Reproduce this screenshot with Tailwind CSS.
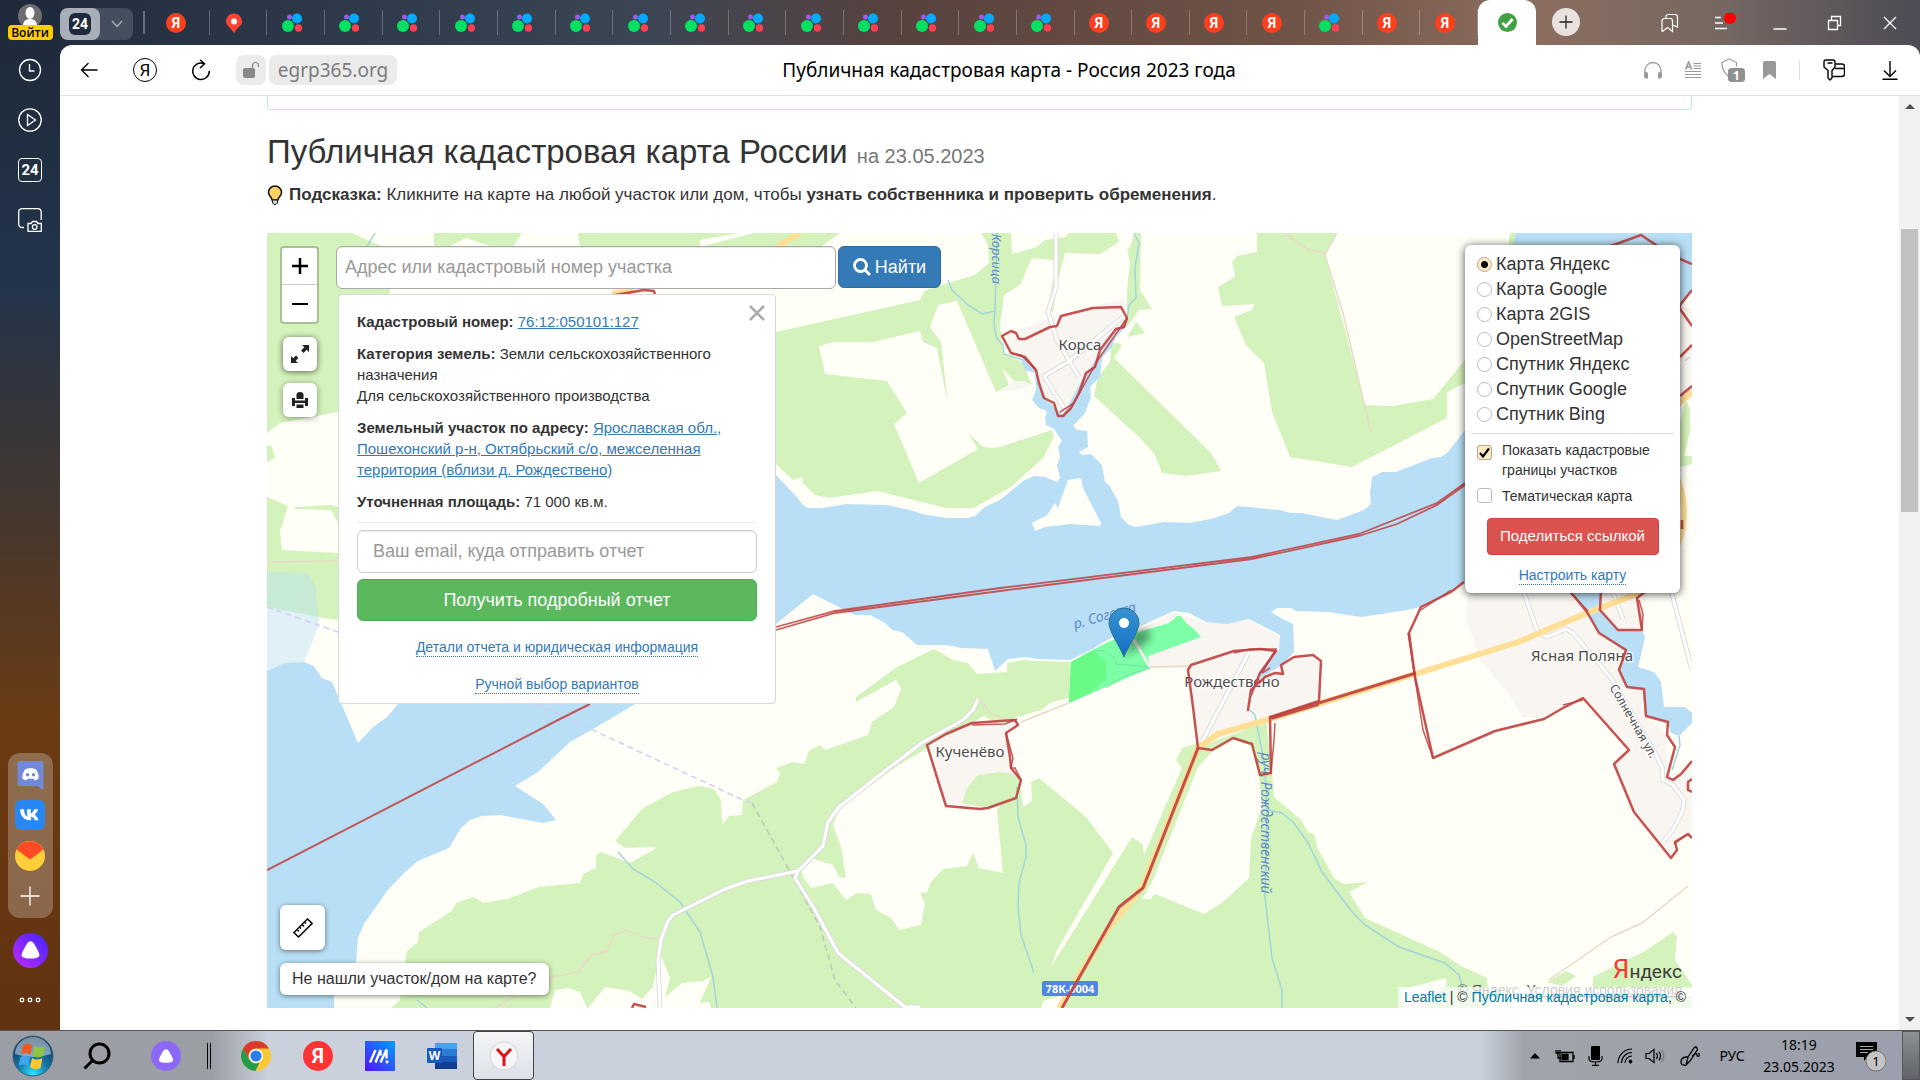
<!DOCTYPE html>
<html lang="ru">
<head>
    <meta charset="UTF-8">
    <meta name="viewport" content="width=device-width, initial-scale=1.0">
    <title>Публичная кадастровая карта - Россия 2023 года</title>
    <script src="https://cdn.jsdelivr.net/npm/@tailwindcss/browser@4"></script>
</head>
<body class="h-screen flex flex-col overflow-hidden bg-white font-['Liberation_Sans',Arial,sans-serif] text-[#333]">

    <!-- Значки вкладок -->
    <svg class="hidden" aria-hidden="true">
        <symbol id="i-ya" viewBox="0 0 20 24">
            <ellipse cx="10" cy="12" rx="10" ry="10" fill="#fc3f1d"/>
            <text x="10" y="17" text-anchor="middle" font-family="Roboto, sans-serif" font-weight="700" font-size="14" fill="#fff">Я</text>
        </symbol>
        <symbol id="i-pin" viewBox="0 0 20 24">
            <path d="M10 2.500c-4.400 0-8 3.400-8 7.800 0 5 5.200 6.200 7.200 11.200h1.600c2-5 7.200-6.200 7.200-11.200 0-4.400-3.600-7.800-8-7.800z" fill="#fc4234"/>
            <circle cx="10" cy="10.500" r="3" fill="#fff"/>
        </symbol>
        <symbol id="i-dots" viewBox="0 0 20 24">
            <circle cx="7.500" cy="6" r="2.500" fill="#965eeb"/>
            <circle cx="15" cy="7.500" r="5" fill="#0af"/>
            <circle cx="6" cy="15" r="6" fill="#04e061"/>
            <circle cx="16.500" cy="17" r="3.700" fill="#ff4053"/>
        </symbol>
    </svg>

    <div class="flex-1 min-h-0 flex bg-linear-to-r from-[#1f2b3c] via-[#58423f] to-[#4d4b55]">

        <!-- Боковая панель браузера -->
        <aside class="w-[60px] shrink-0 flex flex-col items-center bg-[linear-gradient(to_bottom,#1f2b3c_5%,#23344a_28%,#45372f_50%,#6b3c13_70%,#61320f_100%)] text-white">
            <button class="mt-1 h-[37px] flex flex-col items-center" aria-label="Войти">
                <svg class="size-6 shrink-0" viewBox="0 0 24 24"><circle cx="12" cy="12" r="12" fill="#6d6d6d"/><ellipse cx="12" cy="9" rx="4.500" ry="6" fill="#fff"/><path d="M5 22c0-6 4-7 7-7s7 1 7 7z" fill="#fff"/></svg>
                <span class="relative -mt-[3px] w-[45px] h-[15px] rounded bg-[#fc0] text-black text-[12px] leading-[15px] font-semibold text-center font-['Open_Sans',sans-serif]">Войти</span>
            </button>
            <div class="mt-[4px] flex flex-col">
                <button class="h-[50px] w-10 grid place-items-center" aria-label="История"><svg class="size-6" viewBox="0 0 24 24" fill="none" stroke="#fff" stroke-width="1.300"><circle cx="12" cy="12" r="10.500"/><path d="M11.500 6v7h5"/></svg></button>
                <button class="h-[50px] w-10 grid place-items-center" aria-label="Видео"><svg class="size-6" viewBox="0 0 24 24" fill="none" stroke="#fff" stroke-width="1.300"><circle cx="12" cy="12" r="11.200"/><path d="M9.500 6.500v11l8-5.500z"/></svg></button>
                <button class="h-[50px] w-10 grid place-items-center" aria-label="24"><span class="size-6 rounded border border-white text-[15px] leading-[22px] font-bold font-['Roboto',sans-serif]">24</span></button>
                <button class="h-[50px] w-10 grid place-items-center" aria-label="Скриншот"><svg class="size-6" viewBox="0 0 24 24" fill="none" stroke="#fff" stroke-width="1.300"><path d="M6 19.500H4.500Q.7 19.500.7 16V4Q.7.700 4.500.700h15q3.700 0 3.700 3.300v8"/><path d="M10 15.500h3l1.500-2h4l1.500 2h3.300v8H10z"/><circle cx="16.700" cy="19" r="2.300"/></svg></button>
            </div>
            <div class="mt-auto w-[45px] h-[165px] rounded-xl bg-white/25 flex flex-col items-center justify-around py-0.5">
                <button aria-label="Discord"><svg class="w-[27px] h-[30px]" viewBox="0 0 27 30"><path d="M3 1h21a2.500 2.500 0 0 1 2.500 2.500V30L20 26H3a2.500 2.500 0 0 1-2.500-2.500v-20A2.500 2.500 0 0 1 3 1z" fill="#7289da"/><path d="M8 9.500c3-1.800 8-1.800 11 0 2 3 3 6 2.600 9-1.500 1.200-3 1.700-4 1.800l-1-1.600H10.400l-1 1.600c-1-.1-2.500-.6-4-1.800C5 15.500 6 12.500 8 9.500z" fill="#fff"/><circle cx="10.500" cy="14.700" r="1.700" fill="#7289da"/><circle cx="16.500" cy="14.700" r="1.700" fill="#7289da"/></svg></button>
                <button class="w-[30px] h-[30px]" aria-label="VK"><svg class="size-[30px]" viewBox="0 0 30 30"><rect width="30" height="30" rx="6" fill="#2787f5"/><path d="M5.500 9.500h3.200c.2 4.500 2 7 3.700 7.500v-7.500h3v4.300c1.700-.3 3.300-2.200 4-4.300h3.200c-.5 2.400-2.200 4.300-3.500 5.300 1.300.8 3.200 2.400 4 5.200H20c-.7-2-2.300-3.500-4.300-3.700V20h-.5C9 20 5.600 16 5.500 9.500z" fill="#fff" stroke="#fff" stroke-width=".6"/></svg></button>
                <button aria-label="Почта"><svg class="size-[30px]" viewBox="0 0 30 30"><circle cx="15" cy="15" r="15" fill="#ffcf3a"/><path d="M1.600 8.500a15 15 0 0 1 26.800 0L15 18.500z" fill="#ff4a25"/></svg></button>
                <button aria-label="Добавить"><svg class="size-[30px]" viewBox="0 0 30 30" stroke="#fff" stroke-width="1.300"><path d="M15 5.500v19M5.500 15h19"/></svg></button>
            </div>
            <button class="mt-[15px]" aria-label="Алиса">
                <svg class="size-[35px]" viewBox="0 0 40 40">
                    <defs>
                        <linearGradient id="g-alice" x1="0" y1="1" x2="1" y2="0">
                            <stop offset=".1" stop-color="#b429ff"/>
                            <stop offset=".9" stop-color="#4a26ff"/>
                        </linearGradient>
                    </defs>
                    <circle cx="20" cy="20" r="20" fill="url(#g-alice)"/>
                    <path d="M20 9.500c2 0 3 1 4.200 3 2.200 3.400 5 8.500 5.800 11.300.9 3.600-1.500 5.400-10 5.400s-10.900-1.800-10-5.400c.8-2.800 3.600-7.900 5.800-11.300 1.200-2 2.200-3 4.200-3z" fill="#fff"/>
                </svg>
            </button>
            <button class="mt-[22px] mb-5" aria-label="Ещё"><svg class="w-6 h-[20px]" viewBox="0 0 24 20" fill="none" stroke="#fff" stroke-width="1.300"><circle cx="4" cy="10" r="1.800"/><circle cx="12" cy="10" r="1.800"/><circle cx="20" cy="10" r="1.800"/></svg></button>
        </aside>

        <div class="flex-1 min-w-0 flex flex-col">

            <!-- Вкладки -->
            <header class="h-[45px] shrink-0 flex items-center bg-[linear-gradient(to_right,#222e40_0%,#3b4554_31%,#58423f_45%,#6f5346_66%,#8b6e5f_79%)] text-white">
                <div class="h-8 w-[73px] mt-0.5 shrink-0 rounded-lg bg-white/15 flex items-center">
                    <button class="h-8 w-10 rounded-lg bg-[#a9afb8] grid place-items-center" aria-label="Группа 24">
                        <span class="w-[22px] h-[22px] rounded-md bg-[#1f2b3c] text-[14px] leading-[22px] font-bold font-['Roboto',sans-serif]">24</span>
                    </button>
                    <button class="flex-1 grid place-items-center" aria-label="Список вкладок"><svg class="w-3 h-2" viewBox="0 0 12 8" fill="none" stroke="#a4acb7" stroke-width="1.500"><path d="M1 1l5 5.500L11 1"/></svg></button>
                </div>
                <span class="w-[10px] shrink-0"></span>
                <span class="h-[23px] w-[9px] shrink-0 border-l-2 border-white/30"></span>
                <nav id="tabs" class="w-[1326px] flex h-full items-center"></nav>
                <button class="relative w-[58px] h-full shrink-0 rounded-t-xl bg-white grid place-items-center" aria-label="Публичная кадастровая карта">
                    <svg class="size-[19px]" viewBox="0 0 20 20"><circle cx="10" cy="10" r="10" fill="#40a142"/><path d="M4.800 10.400l3.600 3.700 7-7.800" fill="none" stroke="#fff" stroke-width="3"/></svg>
                </button>
                <div class="flex-1 h-full flex items-center bg-linear-to-r from-[#8b6e5f] via-[#756762] to-[#4d4b55]">
                    <button class="ml-4 mb-0.5 size-7 rounded-full bg-[#e8e1de] grid place-items-center" aria-label="Новая вкладка"><svg class="size-4" viewBox="0 0 16 16" stroke="#222" stroke-width="1.300"><path d="M8 1.500v13M1.500 8h13"/></svg></button>
                    <span class="flex-1"></span>
                    <div class="w-[276px] mr-0.5 flex">
                        <button class="flex-1 grid place-items-center" aria-label="Закладки"><svg class="w-[18px] h-5" viewBox="0 0 18 20" fill="none" stroke="#fff" stroke-width="1.200"><path d="M1 18V8q0-2.500 2.500-2.500h6q2 0 2 2.500v10.500l-5-4-5 4z"/><path d="M5 5.500V3.500Q5 1.500 7.500 1.500h6.500q2.500 0 2.500 2.500v10l-5-2"/></svg></button>
                        <button class="flex-1 grid place-items-center" aria-label="Меню"><svg class="w-6 h-5" viewBox="0 0 24 20" fill="none" stroke="#fff" stroke-width="1.300"><path d="M2 4.500h6M2 10h8M2 15.500h12"/><circle cx="17" cy="5" r="6" fill="red" stroke="none"/></svg></button>
                        <button class="flex-1 grid place-items-center" aria-label="Свернуть"><svg class="w-4 h-5" viewBox="0 0 16 20" stroke="#fff" stroke-width="1.500"><path d="M1.500 16h13"/></svg></button>
                        <button class="flex-1 grid place-items-center" aria-label="Восстановить"><svg class="w-4 h-5" viewBox="0 0 16 20" fill="none" stroke="#fff" stroke-width="1.300"><path d="M1.500 7.500h9v9h-9zM4.500 7.500v-4h9v9h-3"/></svg></button>
                        <button class="flex-1 grid place-items-center" aria-label="Закрыть"><svg class="w-4 h-5" viewBox="0 0 16 20" stroke="#fff" stroke-width="1.300"><path d="M2 4l12 12M14 4L2 16"/></svg></button>
                    </div>
                </div>
            </header>

            <!-- Адресная строка -->
            <div class="h-[51px] shrink-0 bg-white border-b border-[#e2e2e2] rounded-t-xl flex items-center font-['Noto_Sans',sans-serif] text-black">
                <button class="ml-px w-14 grid place-items-center" aria-label="Назад"><svg class="size-[18px]" viewBox="0 0 18 18" fill="none" stroke="#000" stroke-width="1.300"><path d="M17.500 9H1.500M8.500 2L1.500 9l7 7"/></svg></button>
                <button class="w-14 grid place-items-center" aria-label="Яндекс"><span class="size-6 rounded-full border border-black text-[17px] leading-[22px] font-['Roboto',sans-serif]">Я</span></button>
                <button class="w-14 grid place-items-center" aria-label="Обновить"><svg class="size-[22px]" viewBox="0 0 22 22" fill="none" stroke="#000" stroke-width="1.500"><path d="M14 4.500A8.300 8.300 0 1 0 19.300 12M10 .8l4.500 4L10 9"/></svg></button>
                <button class="ml-[7px] w-[30px] h-[30px] rounded-lg bg-[#ebebeb] grid place-items-center" aria-label="Защита"><svg class="w-4 h-[18px]" viewBox="0 0 16 18"><rect y="7" width="12" height="10" rx="2" fill="#888"/><path d="M9.500 7V4.500a3 3 0 0 1 6 0V6" fill="none" stroke="#888" stroke-width="1.200"/></svg></button>
                <a href="#" class="ml-[3px] w-[128px] h-[30px] rounded-lg bg-[#ebebeb] text-[#7b7b7b] text-[19px] leading-[30px] text-center">egrp365.org</a>
                <span class="flex-1 pr-3 text-center text-[19px]">Публичная кадастровая карта - Россия 2023 года</span>
                <button class="w-10 grid place-items-center" aria-label="Аудио"><svg class="size-5" viewBox="0 0 20 20"><path d="M2 16v-5.500a8 8 0 0 1 16 0V16" fill="none" stroke="#999" stroke-width="1.300"/><path d="M1 12.500q4-1.500 4 1.500v4.500q-4 .5-4-2.500zM19 12.500q-4-1.500-4 1.500v4.500q4 .5 4-2.500z" fill="#999"/></svg></button>
                <button class="w-10 grid place-items-center" aria-label="Режим чтения"><svg class="w-4 h-[18px]" viewBox="0 0 16 18" stroke="#999" stroke-width="1.200"><path d="M8.500 2.500H16M8.500 5H16M8.500 7.500H16M0 10.500h16M0 13.500h16M0 16.500h16"/><path d="M.7 8.500L3.600 1l3 7.500M1.800 6h3.800" fill="none" stroke-width="1.600"/></svg></button>
                <button class="relative w-10 h-8 grid place-items-center" aria-label="Protect"><svg class="size-6" viewBox="0 0 24 24"><path d="M8 19Q1 13.500.800 4.500L8 .8l7.500 3.700v4" fill="none" stroke="#999" stroke-width="1.200"/><rect x="7" y="10" width="17" height="14" rx="3.500" fill="#919191"/><text x="15.500" y="21.500" font-size="12" font-weight="700" text-anchor="middle" fill="#fff">1</text></svg></button>
                <button class="w-10 pr-2 grid place-items-center" aria-label="В закладки"><svg class="w-[13px] h-[18px]" viewBox="0 0 13 18"><path d="M2 0h9q2 0 2 2v16l-6.500-5L0 18V2q0-2 2-2z" fill="#999"/></svg></button>
                <span class="ml-1.5 mr-1.5 h-5 border-l border-[#ddd]"></span>
                <button class="w-14 grid place-items-center" aria-label="Пароли"><svg class="size-[22px]" viewBox="0 0 22 22" fill="none" stroke="#000" stroke-width="1.400"><path d="M5 11.500L1 8V3Q1 1 3 1h7q2 0 2 2v5L9 11.500V19l-2 2-2-2zM4.500 4h5"/><path d="M12.500 5H19q2.500 0 2.500 2.500V15q0 2.500-2.500 2.500H9.500M12 9.500h9.500"/></svg></button>
                <button class="w-14 mr-0.5 grid place-items-center" aria-label="Загрузки"><svg class="size-5" viewBox="0 0 20 20" fill="none" stroke="#000" stroke-width="1.400"><path d="M10 1v15M4 10.500l6 6 6-6M2.500 19.300h15"/></svg></button>
            </div>

            <!-- Страница -->
            <div class="flex-1 min-h-0 flex bg-white">
                <main class="flex-1 min-w-0 overflow-hidden">
                    <div class="w-full max-w-[1425px] mx-auto">
                        <div class="h-[14px] rounded-b border border-t-0 border-[#bce8f1]"></div>
                        <h1 class="mt-5 text-[33px] leading-[44px]">Публичная кадастровая карта России <small class="text-[20px] text-[#777]">на 23.05.2023</small></h1>
                        <p class="mt-[3px] flex items-center gap-1.5 text-[17px] leading-7">
                            <svg class="w-4 h-5" viewBox="0 0 16 20"><path d="M8 1a6.500 6.500 0 0 0-6.500 6.500C1.500 11 5 12 5 15h6c0-3 3.500-4 3.500-7.500A6.500 6.500 0 0 0 8 1z" fill="#ffd166" stroke="#111" stroke-width="1.500"/><path d="M5.500 15h5v3l-1.500 1.500H7L5.500 18z" fill="#ccc" stroke="#222"/></svg>
                            <span><b>Подсказка:</b> Кликните на карте на любой участок или дом, чтобы <b>узнать собственника и проверить обременения</b>.</span>
                        </p>

                        <div class="relative mt-6 h-[775px] overflow-hidden bg-[#fffff7]">
                            <svg class="absolute inset-0 w-full h-full" viewBox="267 233 1425 775" preserveAspectRatio="xMidYMid slice" role="img" aria-label="Карта">
                                <!-- леса -->
                                <g fill="#d4f2bb">
                                    <path d="M267 233H352L390 250V292L338 412 280 423 267 433zM267 445l5 2 3 11-8 4zM267 497l21 9-8 25 2 19 56 3v67l-20-3-51-10zM295 507l36-2 7 2v16l-7-13-36-1z"/>
                                    <path d="M434 233h88l-9 14h-20l-27-9-18 9h-14zM578 233h230l32 0-20 14H580z"/>
                                    <path d="M776 332L920 300 924 291 945 284 975 275 989 263 988 245 981 233H1011L1012 254 1037 247 1045 240 1066 237 1068 233H1116L1119 242 1100 254 1065 253 1057 283 1053 312 1048 310 1056 263 1052 260 1032 258 1020 285 1004 295 1000 327 1003 353 1023 363 1032 385 1024 381 1014 381 1002 368 1009 385 996 392 957 301 938 305 930 327 941 342 948 405 937 348 923 342 920 331 873 342H833L819 346 825 374 887 381 907 413 894 424 919 483 978 449 968 433 983 447 992 448 1000 447 1052 430 1054 437 1043 458 1011 487 973 508H946L877 491 829 498 815 495 803 483 802 477 793 480 776 464z"/>
                                    <path d="M1134 233h7l-1 57 12 19-13 1-12 17 0-37 3-28-3-12 4-5zM1136 322l9 11-18 4z"/>
                                    <path d="M1116 342l6 3-8 13 97 95 10 18-35 5-24-3-8-20-15-16-45-41 4-19 12-15 1-15z"/>
                                    <path d="M1257 233V252L1237 256 1232 262 1235 277 1218 287 1222 306 1255 304 1252 310 1234 317 1246 345 1264 363 1272 412 1290 457 1352 467 1447 418V392L1465 383V360L1433 399 1393 406 1365 405 1325 255 1337 233zM1510 233h6l-2 15h-6zM1686 400l4 10v22l-6 24 8 0v8l-12 3v-45z"/>
                                    <path d="M391 1008L400 1000 405 963 407 951 418 942 419 932 452 911 456 903 474 897 483 903 507 899 539 887 580 883 583 874 596 868V855L601 852 630 863 655 849V847L625 848 615 841 643 808 673 792 698 786 714 789 721 800 722 825 729 816 742 815 743 800 777 782 780 773 776 768 792 762 804 764 809 751 820 745 825 750 868 735 872 722 894 707 901 689 896 680 856 702V697L897 667 934 649 953 660 968 663 977 674 1007 672V663L1024 660 1038 661 1071 662 1069 698 1052 702 1041 710 1014 718 1003 727 984 716 900 764 840 807 833 825 841 847 846 878 839 877 833 865 813 859 802 870 803 877 811 888 833 883 846 900 857 893 871 894 876 910 891 918 899 930 921 925 925 903 920 893 927 892 931 882 943 869 967 866 973 853 979 868 1003 873 997 810 1020 780 1023 807 1032 801 1031 782 1039 778 1086 817 1113 853 1057 950 1051 967 1132 837 1143 845 1144 855 1182 768 1176 760 1182 748 1197 743 1240 732 1266 718 1272 774 1274 797 1301 820 1308 832 1315 835 1317 847 1334 878 1344 884 1368 882 1349 892 1365 918 1440 952 1461 966 1487 978 1488 1008z"/>
                                    <path d="M1593 977l52-26 28-19 4 4-2 24 17 25v4h-99zM1547 982l19-11 10 5-14 10zM1560 1008l60-12h72v12z"/>
                                </g>
                                <g fill="#fffff7">
                                    <path d="M1198 767L1153 880 1142 899H1150L1155 894 1204 914 1222 903 1249 878 1251 838 1262 807 1258 765 1250 745 1233 740 1212 752z"/>
                                    <path d="M550 1008l5-18 13-2 12 4 7 16zM588 1008l17-21 25 4 12 8 11-12 7-34 10 25-5 19 17-14 21-2 8-4-11 26 9-1 2 6zM1041 1008l2-7 26-8-6 15zM1446 978l1 7-33 23h-10l-4-18zM700 240l40-7h14l-54 14z"/>
                                </g>
                                <path d="M267 572l40 1 9 14 3 38-15 37-37 10z" fill="#b8dff5" fill-opacity=".45"/>

                                <!-- населённые пункты -->
                                <g fill="#f9f6f1">
                                    <path d="M1002 336L1050 318 1125 298 1127 317 1100 353 1063 415 1044 398 1035 370 1010 353zM998 392l14-8-9-15 10 12 12 0 5 6z"/>
                                    <path d="M1138 630L1174 612 1206 623 1249 620 1280 637 1279 650 1260 678 1294 655 1321 661 1319 702 1265 722 1198 748 1190 668H1150z"/>
                                    <path d="M927 745L972 723 1018 722 1006 733 1011 768 1021 780 1016 798 988 808 946 806z"/>
                                    <path d="M1468 590L1466 618 1480 660 1507 692 1523 717 1544 719 1583 698 1629 750 1614 764 1634 812 1671 858 1677 843 1692 835V765L1667 777V735L1646 716 1644 689 1619 670 1626 650 1569 590zM1600 590v20l18 20 24 0 5-40zM1680 308h12v90h-12z"/>
                                </g>
                                <path d="M962 803l5-15 11-13 22-3 17 3 4 7-5 16-28 10z" fill="#d4f2bb"/>

                                <!-- вода -->
                                <g fill="#b8dff5">
                                    <path d="M267 671L285 663 304 662 314 666 322 678 332 682 341 703 358 743 373 727 387 717 398 704 420 690H655L635 704 595 728 570 742 538 772 515 786 543 804 556 820 543 823 500 815 482 816 470 820 461 828 449 848 418 861 405 872 387 891 364 924 358 938 356 963 334 995V1008H267z"/>
                                    <path d="M776 475L795 495 803 505 808 508H822L847 504 887 505 910 510 922 514 947 518H968L975 516 985 507 1000 500 1023 481 1034 476 1045 477 1057 482 1060 478 1057 465 1060 457 1058 447 1062 441 1054 429 1046 425 1045 418 1047 411 1039 408 1032 400 1036 390 1035 373 1025 370 1021 360 1025 358 1036 370 1044 398 1063 415 1082 380 1100 353 1127 317 1126 327 1116 337 1112 347 1102 358 1100 377 1090 387 1091 397 1085 413 1073 426 1077 430 1087 431 1088 447 1079 452 1082 455 1091 454 1102 465 1105 482 1109 485 1118 501 1121 517 1129 525 1136 527 1164 522 1189 523 1211 519 1229 513 1237 506 1279 510 1291 513H1302L1337 520 1364 510 1371 504 1370 493 1372 477 1382 472H1396L1432 458 1441 457 1448 452 1465 430 1516 233H1692V290L1680 308 1600 430 1465 582 1451 592 1421 607 1407 610 1361 617 1329 612 1296 611 1291 608H1277L1271 612 1279 617 1293 624 1294 652 1282 665 1260 678V672L1279 650 1280 635 1249 619 1227 624 1206 622 1189 613 1174 611 1138 627 1107 640 1091 650 1070 660 1038 659 1024 657 1008 659 995 671 988 649 962 648 946 645H917L902 632 892 630 885 623 870 615H855L813 594 776 624z"/>
                                    <path d="M1570 588H1602L1600 610 1618 630 1642 631 1645 637 1638 667 1654 672 1661 682 1664 707H1685L1692 713V723L1679 736 1671 733 1668 722 1646 716 1644 689 1627 687 1619 670 1626 650 1599 633 1587 612z"/>
                                </g>
                                <path d="M1068 480l13-2 2 10 18 35-1 3-30-2-25 3-10 4-3-8 15-8 8-12 3 5z" fill="#fffff7"/>

                                <!-- ручьи -->
                                <g fill="none" stroke="#a2d5da" stroke-width="1.500">
                                    <path d="M618 852L633 869 655 882 680 902 700 932 713 977 717 1008M1017 787L1018 817 1026 845V857L1019 883 1018 907 1021 935 1034 973M1250 710L1255 715 1265 767 1267 813 1265 897 1272 958 1282 990V1008M1267 810L1282 813 1294 823 1308 843 1322 872 1353 913 1365 925 1399 947 1445 963 1459 975 1466 1000"/>
                                    <path d="M948 280L952 290 968 305 982 314 995 311M997 233L995 310 994 323 996 337 1003 345 1004 354 1023 360M1134 233L1139 243 1135 267 1136 298 1129 305 1127 318M1679 736L1680 745 1672 770M375 233l-8 14M417 1000l10 8"/>
                                </g>
                                <!-- тропы и границы -->
                                <g fill="none" stroke="#e9d9c8" stroke-width="1.500">
                                    <path d="M1688 886L1642 923 1611 937 1549 980M978 698L990 713 1000 718 1015 720M1021 722L1069 703M1151 667L1189 666M1284 233L1309 250 1325 253M1337 233L1325 255 1343 313 1364 403 1371 432M495 1008L517 995 553 977 578 972 592 955 607 951 614 935 626 930 648 939 661 937M267 562l71-1"/>
                                </g>
                                <path d="M267 607L338 632M537 704L743 800 752 803M1685 361l7-6" fill="none" stroke="#d3ccf5" stroke-width="1.500" stroke-dasharray="6 4"/>
                                <path d="M752 803L788 868 820 927 835 980 856 1008" fill="none" stroke="#b9c8b8" stroke-width="1.500" stroke-dasharray="6 4"/>
                                <!-- дороги -->
                                <defs>
                                    <path id="roads" d="M978 699L973 710 963 720 923 742 890 767 839 807 828 822 823 846 798 871 748 881 725 889 673 915 668 921 661 940 658 960 660 1008M798 871L795 878 815 910 838 953 905 1007H920M1056 233V287L1048 312 1057 340 1079 377M1123 317L1068 362 1044 376 1064 408M1248 654L1202 742M1523 590L1538 633 1547 637 1566 629 1573 633 1611 678 1655 753 1662 767 1663 780 1673 785 1684 800 1683 810 1673 830 1663 842M1671 590L1692 670M1612 590L1623 619"/>
                                </defs>
                                <g fill="none" stroke-linejoin="round">
                                    <use href="#roads" stroke="#dcdcdc" stroke-width="5"/>
                                    <use href="#roads" stroke="#fff" stroke-width="3"/>
                                    <path d="M1645 591L1587 613 1518 642 1380 685 1270 719 1218 734 1198 748 1143 886 1107 930 1059 1008M1678 404l14-12M1678 480q12 35 0 64M777 247l23-14M612 294l22-4" stroke="#ffdf95" stroke-width="6"/>
                                </g>

                                <!-- выбранный участок -->
                                <path d="M1071 662L1093 650 1110 641 1138 632 1169 623 1177 616H1181L1186 623 1194 629 1201 637 1148 656 1150 668 1069 703z" fill="#7dffa8"/>
                                <path d="M1071 662l22-12 13 12v17l-16 14-21 10z" fill="#69fb86"/>
                                <path d="M1093 650q20 0 24 14l34 3M1106 688l18-12 26-8" fill="none" stroke="#6fe79b"/>
                                <path d="M1134 640L1150 667" stroke="#f3f0ea" stroke-width="3"/>

                                <!-- подписи -->
                                <g font-family="'Noto Sans', sans-serif" font-size="15" fill="#4d4d4d" stroke="#fff" stroke-width="3" stroke-opacity=".7" paint-order="stroke" text-anchor="middle">
                                    <text x="1080" y="350">Корса</text>
                                    <text x="1232" y="687">Рождествено</text>
                                    <text x="970" y="757">Кученёво</text>
                                    <text x="1582" y="661">Ясная Поляна</text>
                                    <text font-size="12" transform="translate(1630 723) rotate(60)">Солнечная ул.</text>
                                </g>
                                <g font-family="'Noto Sans', sans-serif" font-style="italic" font-size="14" fill="#5f8acb" text-anchor="middle">
                                    <text transform="translate(1106 620) rotate(-16)">р. Согожа</text>
                                    <text font-size="13" transform="translate(992 284) rotate(90)" text-anchor="end">Корсица</text>
                                    <text transform="translate(1261 823) rotate(90)">руч. Рождественский</text>
                                </g>
                                <rect x="1042" y="981" width="56" height="15" rx="2" fill="#4f86e6"/>
                                <text x="1070" y="993" font-family="'Noto Sans', sans-serif" font-weight="700" font-size="11" fill="#fff" text-anchor="middle">78К-0004</text>

                                <!-- кадастровые границы -->
                                <g fill="none" stroke="#c0403f" stroke-width="2.500" stroke-opacity=".9" stroke-linejoin="round">
                                    <path d="M1002 336L1011 331 1016 333 1019 339 1025 339 1050 327 1057 326 1061 316 1093 308 1121 307 1127 318 1124 327 1116 329 1100 350 1095 367 1086 373 1079 393 1071 408 1063 416H1058L1054 403 1044 398 1039 383 1036 370 1025 357 1011 353z"/>
                                    <path d="M927 745L946 734 972 723 1015 720 1018 725 1006 733 1010 757 1011 768 1021 780 1016 798 988 808 980 809 946 806 940 787z"/>
                                    <path d="M1191 665L1234 651 1260 649 1276 651 1260 673 1256 683 1250 697 1248 710 1251 690 1265 677 1275 673 1283 674 1281 665 1294 657 1313 655 1321 661 1319 701 1270 717 1271 773 1260 775 1252 744 1233 738 1212 750 1198 748 1193 707 1188 670z"/>
                                    <path d="M1270 718L1416 673M1198 748L1143 888 1119 907 1062 1008" stroke-width="3"/>
                                    <path d="M1464 582L1451 592 1421 607 1409 633 1415 677 1433 758 1495 731 1544 719 1563 708 1583 698 1629 750 1614 764 1634 812 1671 858 1677 850 1675 842 1688 834 1692 838"/>
                                    <path d="M1569 590L1587 612 1599 633 1626 650 1619 670 1627 687 1644 689 1646 716 1668 722 1667 735 1675 747 1667 777 1673 780 1681 774 1692 761M1692 779L1688 782V790L1692 792M1601 590L1600 610 1618 630 1642 630 1637 598 1646 591"/>
                                    <path d="M1600 250l41-15 30 20 21 9M1692 290l-12 15 0 4 12 17M1680 357l12-12M1680 396l12-10M1682 520v9M632 1008l2-4 12 3M615 295l29-5 10 1 1 4"/>
                                </g>
                                <g fill="none" stroke="#c0403f" stroke-width="1.500" stroke-opacity=".85">
                                    <path d="M776 627L835 611 900 602 1000 588 1252 557 1359 534 1437 503 1465 483M776 630L835 613 1000 591 1252 559 1359 536 1397 524 1437 505 1465 485" stroke-width="1.800"/>
                                    <path d="M267 870L560 719 590 704" stroke-width="2"/>
                                    <path d="M1408 633L1423 730 1433 758M1275 723L1274 740 1271 773M1319 705L1272 719M1127 318L1098 360 1074 403 1060 412M1011 353l10 2 15 15M1006 733l7 25 -2 10 4 0 6 12M972 725l33-1 12-5M1234 653l16-4 26 0-14 24 8-5M1639 600l4 14-1 16M1451 590l-30 20M1583 700l-20 5M1688 834l-14 10M1570 592l18 19"/>
                                </g>

                                <!-- маркер -->
                                <defs>
                                    <linearGradient id="g-pin" x1="0" y1="0" x2="0" y2="1"><stop offset="0" stop-color="#3a93d0"/><stop offset="1" stop-color="#126fc6"/></linearGradient>
                                    <filter id="soft" x="-50%" y="-50%" width="200%" height="200%"><feGaussianBlur stdDeviation="4"/></filter>
                                </defs>
                                <path d="M1124 657l8-24q16-9 18 0t-18 18z" fill="#000" fill-opacity=".4" filter="url(#soft)"/>
                                <path d="M1124 657c-3-9-15-25-15-34a15 15 0 0 1 30 0c0 9-12 25-15 34z" fill="url(#g-pin)" stroke="#2e6c97"/>
                                <circle cx="1124" cy="623" r="5" fill="#fff"/>

                                <g text-anchor="end">
                                    <text x="1682" y="978" font-family="Roboto, sans-serif" font-size="19" fill="#3c3c3c"><tspan fill="#f33" font-size="26">Я</tspan>ндекс</text>
                                    <text x="1682" y="995" font-family="'Liberation Sans', sans-serif" font-size="14" fill="#555">© Яндекс. <tspan text-decoration="underline">Условия использования</tspan></text>
                                </g>
                            </svg>

                            <!-- поиск и карточка участка -->
                            <div class="absolute left-[13px] top-[13px] flex items-start gap-[17px] text-black">
                                <div class="w-[39px] flex flex-col items-center">
                                    <div class="w-[39px] rounded border-2 border-black/20 bg-clip-padding bg-white flex flex-col">
                                        <button class="h-[37px] grid place-items-center border-b border-[#ccc]" aria-label="Приблизить"><svg class="size-4" viewBox="0 0 16 16" stroke="#000" stroke-width="2.500"><path d="M8 0v16M0 8h16"/></svg></button>
                                        <button class="h-[37px] grid place-items-center" aria-label="Отдалить"><svg class="size-4" viewBox="0 0 16 16" stroke="#000" stroke-width="2"><path d="M0 8h16"/></svg></button>
                                    </div>
                                    <button class="mt-[13px] size-[34px] rounded-md bg-white shadow-[0_1px_6px_rgba(0,0,0,.6)] grid place-items-center" aria-label="Во весь экран"><svg class="size-[18px]" viewBox="0 0 18 18" fill="#222"><path d="M11 0h7v7l-2.300-2.300-3.200 3.200-2.400-2.400 3.200-3.200zM0 18v-7l2.300 2.300 2.700-2.700 2.400 2.400-2.700 2.700L7 18z"/></svg></button>
                                    <button class="mt-3 size-[34px] rounded-md bg-white shadow-[0_1px_6px_rgba(0,0,0,.4)] grid place-items-center" aria-label="Печать"><svg class="size-4" viewBox="0 0 16 16" fill="#222"><path d="M4.500 7V2.500Q4.500 0 8 0t3.500 2.500V7zM0 6h3v2.500h10V6h3v8h-3v-3H3v3H0zM4.500 12.500h7V16h-7z"/></svg></button>
                                </div>

                                <div>
                                    <form class="flex gap-0.5">
                                        <input type="text" aria-label="Адрес или кадастровый номер участка" placeholder="Адрес или кадастровый номер участка" class="w-[500px] h-[43px] px-2 rounded-md border border-[#aaa] bg-white text-[18px] placeholder:text-[#999] shadow-[inset_0_1px_1px_rgba(0,0,0,.1)]">
                                        <button type="button" class="w-[103px] h-[42px] rounded-md bg-[#337ab7] border border-[#2e6da4] text-white text-[18px] flex items-center justify-center gap-1"><svg class="size-[18px]" viewBox="0 0 18 18" fill="none" stroke="#fff" stroke-width="2.800"><circle cx="7.500" cy="7.500" r="6"/><path d="M12 12l5 5"/></svg>Найти</button>
                                    </form>

                                    <section class="relative ml-0.5 mt-[5px] w-[438px] h-[410px] rounded border border-[#d8d8d8] bg-white px-[18px] pt-4 text-[15px] leading-[21px] text-[#333]">
                                        <button class="absolute right-[9px] top-[9px] size-[18px]" aria-label="Закрыть карточку"><svg class="size-[18px]" viewBox="0 0 18 18" stroke="#aaa" stroke-width="2.500"><path d="M2 2l14 14M16 2L2 16"/></svg></button>
                                        <p class="mb-[11px]"><b>Кадастровый номер:</b> <a href="#" class="text-[#337ab7] underline">76:12:050101:127</a></p>
                                        <p class="mb-[11px]"><b>Категория земель:</b> Земли сельскохозяйственного<br>назначения<br>Для сельскохозяйственного производства</p>
                                        <p class="mb-[11px]"><b>Земельный участок по адресу:</b> <a href="#" class="text-[#337ab7] underline">Ярославская обл.,<br>Пошехонский р-н, Октябрьский с/о, межселенная<br>территория (вблизи д. Рождествено)</a></p>
                                        <p><b>Уточненная площадь:</b> 71 000 кв.м.</p>
                                        <hr class="mt-[10px] mb-[7px] border-[#eee]">
                                        <input type="email" aria-label="Ваш email" placeholder="Ваш email, куда отправить отчет" class="w-full h-[43px] px-[15px] rounded-md border border-[#ccc] text-[18px] placeholder:text-[#999] shadow-[inset_0_1px_1px_rgba(0,0,0,.08)]">
                                        <button type="button" class="mt-1.5 w-full h-[42px] rounded-md bg-[#5cb85c] border border-[#4cae4c] text-white text-[18px]">Получить подробный отчет</button>
                                        <div class="mt-[17px] flex flex-col items-center gap-[18px] text-[14px] leading-[18px] text-[#337ab7]">
                                            <a href="#" class="border-b border-dotted border-[#337ab7]">Детали отчета и юридическая информация</a>
                                            <a href="#" class="border-b border-dotted border-[#337ab7]">Ручной выбор вариантов</a>
                                        </div>
                                    </section>
                                </div>
                            </div>

                            <!-- слои -->
                            <section class="absolute right-3 top-3 w-[215px] h-[348px] rounded-md bg-white shadow-[0_1px_8px_rgba(0,0,0,.7)] px-1.5 pt-[7px] text-[18px]">
                                <div id="layers" class="pl-1.5 pb-[6px]"></div>
                                <hr class="border-[#ddd]">
                                <div class="pl-1.5 pt-1.5 text-[14px] leading-5">
                                    <label class="flex items-start gap-[10px]"><input type="checkbox" checked class="peer sr-only"><span class="mt-[5px] size-[15px] shrink-0 rounded-[3px] border border-[#b9a98a] bg-[#fdebc8] grid place-items-center"><svg class="size-[11px]" viewBox="0 0 11 11" fill="none" stroke="#000" stroke-width="2.200"><path d="M1 6l3 3.500L10 1.500"/></svg></span><span>Показать кадастровые<br>границы участков</span></label>
                                    <label class="mt-1.5 flex items-start gap-[10px]"><input type="checkbox" class="mt-[2px] size-[15px] shrink-0 appearance-none rounded-[3px] border border-[#bbb] bg-white"><span>Тематическая карта</span></label>
                                </div>
                                <div class="mt-[12px] flex flex-col items-center">
                                    <button class="w-[172px] h-[37px] rounded bg-[#d9534f] border border-[#d43f3a] text-white text-[15px]">Поделиться ссылкой</button>
                                    <a href="#" class="mt-3 text-[14px] leading-[17px] text-[#337ab7] border-b border-dotted border-[#337ab7]">Настроить карту</a>
                                </div>
                            </section>

                            <div class="absolute left-[13px] bottom-[13px] flex flex-col items-start gap-[13px]">
                                <button class="size-[45px] rounded-md bg-white shadow-[0_1px_5px_rgba(0,0,0,.5)] grid place-items-center" aria-label="Линейка"><svg class="size-5" viewBox="0 0 20 20" fill="none" stroke="#111" stroke-width="1.600"><path d="M1 14.500L14.500 1 19 5.500 5.500 19zM4 11.500l2 2M6.500 9l1.500 1.500M9 6.500l2 2M11.500 4L13 5.500"/></svg></button>
                                <button class="h-8 px-3 rounded-md bg-white shadow-[0_1px_5px_rgba(0,0,0,.5)] text-[16px]">Не нашли участок/дом на карте?</button>
                            </div>
                            <p class="absolute right-0 bottom-0 h-[21px] px-1.5 bg-white/70 text-[14px] leading-[20px]"><a href="#" class="text-[#0078a8]">Leaflet</a> | © <a href="#" class="text-[#0078a8]">Публичная кадастровая карта</a>, ©</p>
                        </div>
                    </div>
                </main>

                <div class="w-[21px] shrink-0 bg-[#f1f1f1] flex flex-col items-center" aria-hidden="true">
                    <svg class="w-[10px] h-[20px]" viewBox="0 0 10 20"><path d="M0 13l5-5 5 5z" fill="#505050"/></svg>
                    <span class="mt-[113px] w-[17px] h-[283px] bg-[#c1c1c1]"></span>
                    <svg class="mt-auto w-[10px] h-[20px]" viewBox="0 0 10 20"><path d="M0 7l5 5 5-5z" fill="#505050"/></svg>
                </div>
            </div>
        </div>
    </div>

    <!-- Панель задач -->
    <footer class="h-[50px] shrink-0 border-t border-[#555] flex items-center text-black font-['Noto_Sans',sans-serif] bg-linear-to-r from-[#9b9ea5] from-11% via-[#cad1dc] via-14% to-[#cad1dc]">
        <div class="flex items-center h-full">
            <button class="w-[66px] grid place-items-center" aria-label="Пуск"><svg class="size-[42px]" viewBox="0 0 42 42"><defs><radialGradient id="g-start" cx=".5" cy=".95" r=".9"><stop offset="0" stop-color="#2ee6ff"/><stop offset=".45" stop-color="#1671a5"/><stop offset="1" stop-color="#0d3555"/></radialGradient></defs><circle cx="21" cy="21" r="20" fill="url(#g-start)" stroke="#345f7c"/><path d="M3 19a18 17 0 0 1 36 0q-18 6-36 0z" fill="#fff" fill-opacity=".45"/><path d="M11 10q5-3 9.500 0l-2 9.500q-5-3-9.500 0z" fill="#ec5a28"/><path d="M22.500 11q5 3 10.500 0l-2 10q-5 3-10.500-.5z" fill="#8dc63f"/><path d="M8.500 22q5-3 9.500 0L16 31q-5-3-9.500 0z" fill="#41a5e8"/><path d="M20 23q5 3 10.500 0l-2 10q-5 3-10.500-1z" fill="#fdc82f"/></svg></button>
            <button class="w-[62px] grid place-items-center" aria-label="Поиск"><svg class="size-7" viewBox="0 0 28 28" fill="none" stroke="#000" stroke-width="3"><circle cx="16.500" cy="11.500" r="9.500"/><path d="M9.500 18.500L1.500 26.500"/></svg></button>
            <button class="w-[76px] grid place-items-center" aria-label="Алиса"><svg class="size-[30px]" viewBox="0 0 40 40"><circle cx="20" cy="20" r="20" fill="#8c68f8"/><path d="M20 11c2 0 3 1 4 3 2 3 4.500 7.500 5.200 10 .8 3.200-1.200 5-9.200 5s-10-1.800-9.200-5c.7-2.500 3.200-7 5.200-10 1-2 2-3 4-3z" fill="#fff"/></svg></button>
            <span class="mx-[3px] w-1 h-[26px] border-x border-black"></span>
            <button class="ml-[11px] w-[62px] grid place-items-center" aria-label="Chrome"><svg class="size-[30px]" viewBox="0 0 30 30"><circle cx="15" cy="15" r="15" fill="#fcc934"/><path d="M2 7.500A15 15 0 0 1 28 7.500H15a7.500 7.500 0 0 0-6.500 11.300z" fill="#d93a2d"/><path d="M2 7.500l6.500 11.200A7.500 7.500 0 0 0 18.500 21.600L14.500 30A15 15 0 0 1 2 7.500z" fill="#259b4b"/><circle cx="15" cy="15" r="7" fill="#fff"/><circle cx="15" cy="15" r="5.600" fill="#2b7de9"/></svg></button>
            <button class="w-[62px] grid place-items-center" aria-label="Яндекс"><svg class="size-[30px]" viewBox="0 0 30 30"><circle cx="15" cy="15" r="15" fill="#f33"/><text x="15" y="22" font-family="Roboto, sans-serif" font-size="20" font-weight="700" fill="#fff" text-anchor="middle">Я</text></svg></button>
            <button class="w-[62px] grid place-items-center" aria-label="MyASUS"><svg class="size-[30px]" viewBox="0 0 30 30"><defs><linearGradient id="g-asus" x1="0" y1="1" x2="1" y2="0"><stop offset=".1" stop-color="#4a1fff"/><stop offset="1" stop-color="#00a0ff"/></linearGradient></defs><path d="M0 0h30v30H0z" fill="url(#g-asus)"/><path d="M5 21.500L10.500 9M10.500 21.500L15.500 9v5.500M15.500 21.500L21.500 8.500V17.500" fill="none" stroke="#fff" stroke-width="2.400"/><circle cx="22" cy="20.800" r="1.600" fill="#fff"/></svg></button>
            <button class="w-[62px] grid place-items-center" aria-label="Word"><svg class="w-[30px] h-[28px]" viewBox="0 0 30 28"><path d="M8 1h22v6H8z" fill="#41a5ee"/><path d="M8 7h22v7H8z" fill="#2b7cd3"/><path d="M8 14h22v6H8z" fill="#185abd"/><path d="M8 20h22v7H8z" fill="#103f91"/><rect y="6" width="15" height="15" rx="1" fill="#185abd"/><text x="7.500" y="18" font-size="12" font-weight="700" fill="#fff" text-anchor="middle">W</text></svg></button>
            <button class="w-[61px] h-[49px] rounded-sm border border-[#444] bg-linear-to-b from-[#f4f5f7] to-[#dde1e8] grid place-items-center" aria-label="Яндекс Браузер"><svg class="size-[30px]" viewBox="0 0 30 30"><circle cx="15" cy="15" r="14" fill="#f5f5f5" stroke="#d5d5d5"/><path d="M8 8l7 7.500V25M22 8l-7 7.500" fill="none" stroke="#d8141a" stroke-width="3"/></svg></button>
        </div>
        <div class="ml-auto h-full w-[440px] flex items-center bg-linear-to-r from-[#cad1dc] via-[#9fa4aa] via-10% to-[#9b9fac]">
            <button class="ml-[40px] w-[30px] grid place-items-center" aria-label="Скрытые значки"><svg class="w-[10px] h-[6px]" viewBox="0 0 10 6"><path d="M0 5.500L5 0l5 5.500z"/></svg></button>
            <button class="w-[30px] grid place-items-center" aria-label="Батарея"><svg class="w-5 h-4" viewBox="0 0 20 16" fill="none" stroke="#000" stroke-width="1.300"><path d="M5 4.500h13v9H5zM19 7v4M3 2v3M1 2v3h4V2M3 5v5h3"/><path d="M7 6.500h6v5H7z" fill="#000"/></svg></button>
            <button class="w-[30px] grid place-items-center" aria-label="Микрофон"><svg class="w-4 h-5" viewBox="0 0 16 20"><rect x="4" width="9" height="14" rx="1"/><path d="M2 10v3q0 3 6.500 3t6.500-3v-3M8.500 16v3M5 19.300h7" fill="none" stroke="#000" stroke-width="1.200"/></svg></button>
            <button class="w-[30px] grid place-items-center" aria-label="Wi-Fi"><svg class="size-4" viewBox="0 0 16 16" fill="none" stroke="#000" stroke-width="1.200"><path d="M1 15A14 14 0 0 1 15 1M4.500 15A10.500 10.500 0 0 1 15 4.500M8 15a7 7 0 0 1 7-7"/><circle cx="13.500" cy="13.500" r="1.300" fill="#000"/></svg></button>
            <button class="w-[30px] grid place-items-center" aria-label="Громкость"><svg class="w-5 h-4" viewBox="0 0 20 16" fill="none" stroke="#000" stroke-width="1.200"><path d="M1 5.500h3L9 1.500v13L4 10.500H1zM11.500 5q2 3 0 6M14 3.500q3 4.500 0 9"/><path d="M16.500 1.500q4.500 6.500 0 13" stroke="#777"/></svg></button>
            <button class="w-[40px] grid place-items-center" aria-label="Перо"><svg class="size-5" viewBox="0 0 20 20" fill="none" stroke="#000" stroke-width="1.300"><path d="M6 19l2-8 6-9q2-2 3 0t-1 4l-6 9zM7.500 11Q1 11 1 15.500T5 19M12 10l3-2q2-1 2 1t2 1v-3"/></svg></button>
            <button class="w-[44px] text-[14px]">РУС</button>
            <div class="w-[90px] text-center text-[14px] leading-[22px]"><div>18:19</div><div>23.05.2023</div></div>
            <button class="w-[54px] grid place-items-center" aria-label="Уведомления"><svg class="w-[30px] h-[32px]" viewBox="0 0 30 32"><path d="M0 2h21v15H11l-3 4v-4H0z"/><path d="M4 6.500h13M4 9.500h13M4 12.500h8" stroke="#aaa"/><circle cx="20" cy="21" r="10" fill="#c4c4c4" stroke="#777"/><text x="20" y="26" font-size="13" text-anchor="middle">1</text></svg></button>
            <button class="ml-auto w-[18px] h-full border border-[#555] bg-linear-to-b from-[#8d9096] to-[#5f6268]" aria-label="Показать рабочий стол"></button>
        </div>
    </footer>

    <script>
        // вкладки слева направо
        const tabIcons = ['ya', 'pin', ...Array(14).fill('dots'), 'ya', 'ya', 'ya', 'ya', 'dots', 'ya', 'ya'];
        document.getElementById('tabs').innerHTML = tabIcons.map((icon) => `
            <a href="#" aria-label="Вкладка" class="flex-1 h-[25px] pr-2 border-r border-white/25 flex items-center justify-center">
                <svg class="w-5 h-6"><use href="#i-${icon}"/></svg>
            </a>`).join('');

        const layers = ['Карта Яндекс', 'Карта Google', 'Карта 2GIS', 'OpenStreetMap', 'Спутник Яндекс', 'Спутник Google', 'Спутник Bing'];
        document.getElementById('layers').innerHTML = layers.map((name, i) => `
            <label class="h-[25px] flex items-center gap-1">
                <input type="radio" name="layer" ${i === 0 ? 'checked' : ''} class="size-[15px] appearance-none rounded-full border border-[#bbb] bg-white checked:border-[#b9a98a] checked:bg-[radial-gradient(circle,#000_0_3px,#fdebc8_4px)]">
                ${name}
            </label>`).join('');
    </script>
</body>
</html>
